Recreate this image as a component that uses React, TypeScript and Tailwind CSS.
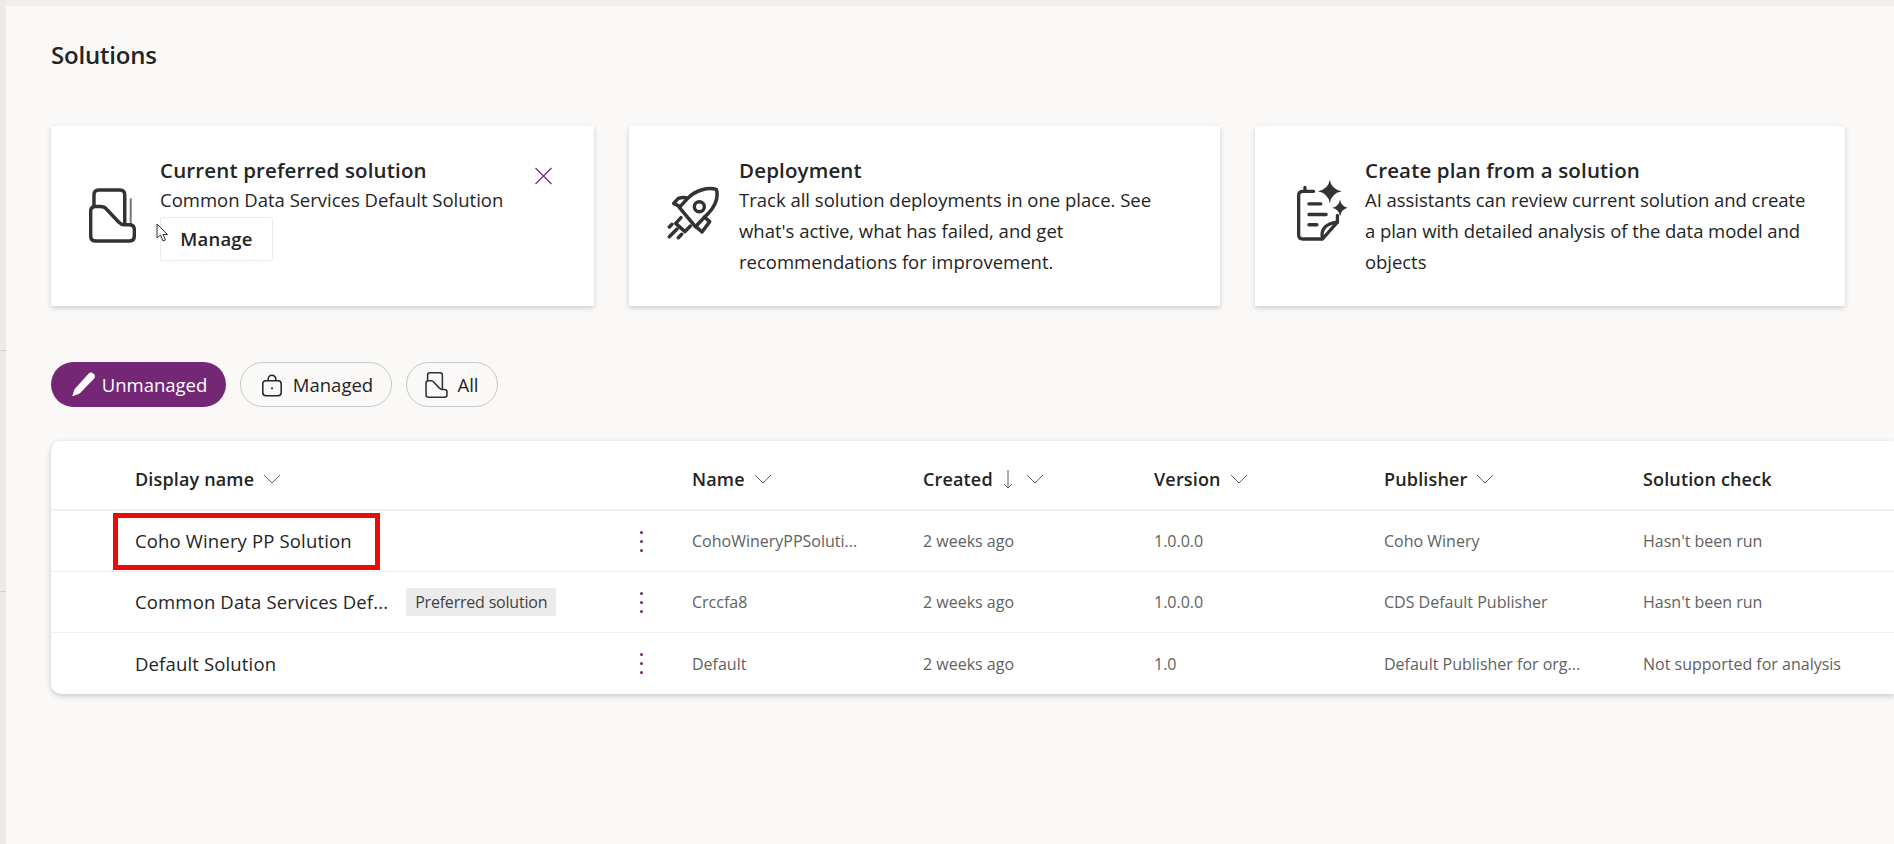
const rowGrid = 'grid grid-cols-[84px_493px_64px_231px_231px_230px_259px_1fr] items-center';

const solutions = [
  { display: 'Coho Winery PP Solution', name: 'CohoWineryPPSoluti...', version: '1.0.0.0', publisher: 'Coho Winery', check: "Hasn't been run" },
  { display: 'Common Data Services Def...', badge: 'Preferred solution', name: 'Crccfa8', version: '1.0.0.0', publisher: 'CDS Default Publisher', check: "Hasn't been run" },
  { display: 'Default Solution', name: 'Default', version: '1.0', publisher: 'Default Publisher for org...', check: 'Not supported for analysis' },
];

function FolderIcon() {
  return (
    <svg viewBox="57 55 142 164" className="h-[55px] w-[47px]" fill="none" stroke="#333" strokeWidth="10.5" strokeLinejoin="round">
      <path d="M72 112V75Q72 60 87 60H150Q165 60 165 75V162" />
      <path d="M183 85V165" stroke="#777" strokeWidth="6" />
      <path d="M62 125Q62 110 77 110H92Q103 110 110 118L148 158Q154 165 162 165H178Q194 165 194 180V198Q194 214 178 214H78Q62 214 62 198Z" />
    </svg>
  );
}

function RocketIcon() {
  return (
    <svg viewBox="45 40 165 165" className="h-[55px] w-[55px]" fill="none" stroke="#333" strokeWidth="10.5" strokeLinecap="round" strokeLinejoin="round">
      <path d="M196 53C170 46 132 56 110 80L85 107L133 165L172 125C192 103 204 80 196 53Z" />
      <circle cx="145" cy="105" r="15" />
      <path d="M87 105L68 95L82 80Q92 76 106 78" />
      <path d="M160 136L176 150L153 181L135 165" />
      <path d="M90 138L74 155L102 180L118 163" />
      <path d="M55 166L63 158M55 195L78 172M82 198L92 188" />
    </svg>
  );
}

function PlanIcon() {
  return (
    <svg viewBox="45 25 160 190" className="h-[63px] w-[53px]">
      <g fill="none" stroke="#333" strokeWidth="10" strokeLinecap="round" strokeLinejoin="round">
        <path d="M98 62H66Q53 62 53 75V193Q53 206 66 206H125L170 155V135" />
        <path d="M125 205Q116 162 170 155" />
        <path d="M72 50V60M84 100H120M84 132H136M84 163H108" />
      </g>
      <path d="M147 27Q151 55 183 62Q151 69 147 98Q143 69 111 62Q143 55 147 27Z" fill="#333" />
      <path d="M178 87Q181 107 201 112Q181 117 178 138Q175 117 155 112Q175 107 178 87Z" fill="#333" />
    </svg>
  );
}

function PencilIcon() {
  return (
    <svg viewBox="0 0 24 24" className="h-[27px] w-[27px]" fill="#fff">
      <path d="M16.2 2.6a3.3 3.3 0 0 1 4.9 4.6L9 19.6c-.4.4-.8.6-1.3.8L2 22.5l1.8-5.6c.2-.5.4-.9.8-1.3z" />
    </svg>
  );
}

function LockIcon() {
  return (
    <svg viewBox="0 0 24 24" className="h-[26px] w-[26px]" fill="none" stroke="#242424" strokeWidth="1.4">
      <path d="M8.5 8V6.5a3.5 3.5 0 0 1 7 0V8" />
      <rect x="3.5" y="8" width="17" height="14" rx="3" />
      <circle cx="12" cy="15" r="1" fill="#242424" stroke="none" />
    </svg>
  );
}

function AllIcon() {
  return (
    <svg viewBox="57 55 142 164" className="h-[26px] w-[23px]" fill="none" stroke="#333" strokeWidth="10" strokeLinejoin="round">
      <path d="M72 112V75Q72 60 87 60H150Q165 60 165 75V162" />
      <path d="M62 125Q62 110 77 110H92Q103 110 110 118L148 158Q154 165 162 165H178Q194 165 194 180V198Q194 214 178 214H78Q62 214 62 198Z" />
    </svg>
  );
}

function SortChevron() {
  return (
    <svg viewBox="0 0 18 10" className="ml-[9px] h-[10px] w-[18px]" fill="none" stroke="#616161" strokeWidth="1">
      <path d="M1 1L9 9L17 1" />
    </svg>
  );
}

function HeaderCell({ label, sort }: { label: string; sort?: boolean }) {
  return (
    <div className="flex items-center pt-[8px] text-[18px] font-semibold tracking-[0.15px] text-[#242424]">
      <span>{label}</span>
      {sort && (
        <svg viewBox="0 0 10 19" className="ml-[10px] mr-[4px] h-[19px] w-[10px]" fill="none" stroke="#616161" strokeWidth="1">
          <path d="M5 0V18M1 14L5 18L9 14" />
        </svg>
      )}
      <SortChevron />
    </div>
  );
}

export default function App() {
  return (
    <div className="flex h-screen overflow-hidden bg-[#faf9f8] font-['Open_Sans',sans-serif] text-[#242424]">
      {/* sliver of the nav that is cut off on the left */}
      <div className="relative w-[6px] shrink-0 bg-[#edebe9]">
        <div className="absolute left-0 top-[350px] h-px w-full bg-[#d1d1d1]" />
        <div className="absolute left-0 top-[591px] h-px w-full bg-[#d1d1d1]" />
      </div>

      <div className="min-w-0 flex-1">
        <div className="h-[6px] bg-[#f0efee]" />

        <main className="pl-[45px]">
          <h1 className="flex h-[98px] items-center pb-[1px] text-[24px] font-semibold leading-none tracking-[-0.2px]">Solutions</h1>

          {/* Top cards */}
          <div className="mt-[22px] grid grid-cols-[543px_591px_590px] gap-[35px]">
            <div className="relative flex h-[180px] bg-white shadow-[0_2px_5px_rgba(0,0,0,0.18)]">
              <div className="ml-[38px] mt-[62px] mr-[24px] shrink-0">
                <FolderIcon />
              </div>
              <div className="pt-[29px]">
                <div className="text-[20.5px] font-semibold leading-[31px] tracking-[0.15px]">Current preferred solution</div>
                <div className="-mt-[2px] mb-[2px] text-[18.5px] leading-[31px]">Common Data Services Default Solution</div>
                <button className="flex h-[44px] w-[113px] items-center justify-center rounded-[2px] border border-[#ebebeb] text-[18.5px] font-semibold tracking-[0.2px]">
                  Manage
                </button>
              </div>
              <svg viewBox="0 0 18 18" className="absolute left-[483px] top-[41px] h-[18px] w-[19px]" stroke="#742774" strokeWidth="1.2" fill="none">
                <path d="M1 1L17 17M17 1L1 17" />
              </svg>
              <svg viewBox="0 0 12 20" className="absolute left-[105px] top-[97px] h-[20px] w-[12px]" fill="#fff" stroke="#333" strokeWidth="1">
                <path d="M1 1V15L4.5 12L7 18L9.5 17L7 11.5H11.5Z" />
              </svg>
            </div>

            <div className="flex h-[180px] bg-white shadow-[0_2px_5px_rgba(0,0,0,0.18)]">
              <div className="ml-[37px] mt-[59px] mr-[18px] shrink-0">
                <RocketIcon />
              </div>
              <div className="pt-[29px]">
                <div className="text-[20.5px] font-semibold leading-[31px] tracking-[0.15px]">Deployment</div>
                <p className="-mt-[2px] w-[430px] text-[18.5px] leading-[31px]">
                  Track all solution deployments in one place. See what's active, what has failed, and get recommendations for improvement.
                </p>
              </div>
            </div>

            <div className="flex h-[180px] bg-white shadow-[0_2px_5px_rgba(0,0,0,0.18)]">
              <div className="ml-[41px] mt-[53px] mr-[16px] shrink-0">
                <PlanIcon />
              </div>
              <div className="pt-[29px]">
                <div className="text-[20.5px] font-semibold leading-[31px] tracking-[0.15px]">Create plan from a solution</div>
                <p className="-mt-[2px] w-[452px] text-[18.5px] leading-[31px] tracking-[-0.05px]">
                  AI assistants can review current solution and create a plan with detailed analysis of the data model and objects
                </p>
              </div>
            </div>
          </div>

          {/* Filter pills */}
          <div className="mt-[56px] flex gap-[14px]">
            <button className="flex h-[45px] w-[175px] items-center justify-center gap-[5px] rounded-full bg-[#742774] text-[18.5px] text-white">
              <PencilIcon />
              Unmanaged
            </button>
            <button className="flex h-[45px] w-[152px] items-center justify-center gap-[8px] rounded-full border border-[#c7c7c7] text-[18.5px]">
              <LockIcon />
              Managed
            </button>
            <button className="flex h-[45px] w-[92px] items-center justify-center gap-[9px] rounded-full border border-[#c7c7c7] text-[18.5px]">
              <AllIcon />
              All
            </button>
          </div>

          {/* Solutions table */}
          <div className="relative mt-[34px] rounded-l-[10px] bg-white shadow-[0_2px_6px_rgba(0,0,0,0.2)]">
            <div className={`${rowGrid} h-[70px] border-b-2 border-[#f0f0f0]`}>
              <div />
              <HeaderCell label="Display name" />
              <div />
              <HeaderCell label="Name" />
              <HeaderCell label="Created" sort />
              <HeaderCell label="Version" />
              <HeaderCell label="Publisher" />
              <div className="pt-[8px] text-[18px] font-semibold tracking-[0.15px]">Solution check</div>
            </div>

            {solutions.map((s, i) => (
              <div key={s.name} className={`${rowGrid} h-[61px] text-[16px] text-[#616161] ${i < 2 ? 'border-b border-[#f0f0f0]' : ''}`}>
                <div />
                <div className="flex items-center gap-[18px]">
                  <span className="text-[18.5px] tracking-[0.15px] text-[#242424]">{s.display}</span>
                  {s.badge && (
                    <span className="flex h-[28px] w-[150px] items-center justify-center rounded-[2px] bg-[#ebebeb] text-[16px] tracking-[-0.2px] text-[#424242]">
                      {s.badge}
                    </span>
                  )}
                </div>
                <div className="flex w-[27px] flex-col items-center gap-[6px]">
                  <span className="h-[3px] w-[3px] rounded-full bg-[#742774]" />
                  <span className="h-[3px] w-[3px] rounded-full bg-[#742774]" />
                  <span className="h-[3px] w-[3px] rounded-full bg-[#742774]" />
                </div>
                <div>{s.name}</div>
                <div>2 weeks ago</div>
                <div>{s.version}</div>
                <div>{s.publisher}</div>
                <div>{s.check}</div>
              </div>
            ))}

            {/* red callout drawn over the first row */}
            <div className="absolute left-[62px] top-[72px] h-[57px] w-[267px] border-[5px] border-[#ea0b0b]" />
          </div>
        </main>
      </div>
    </div>
  );
}
